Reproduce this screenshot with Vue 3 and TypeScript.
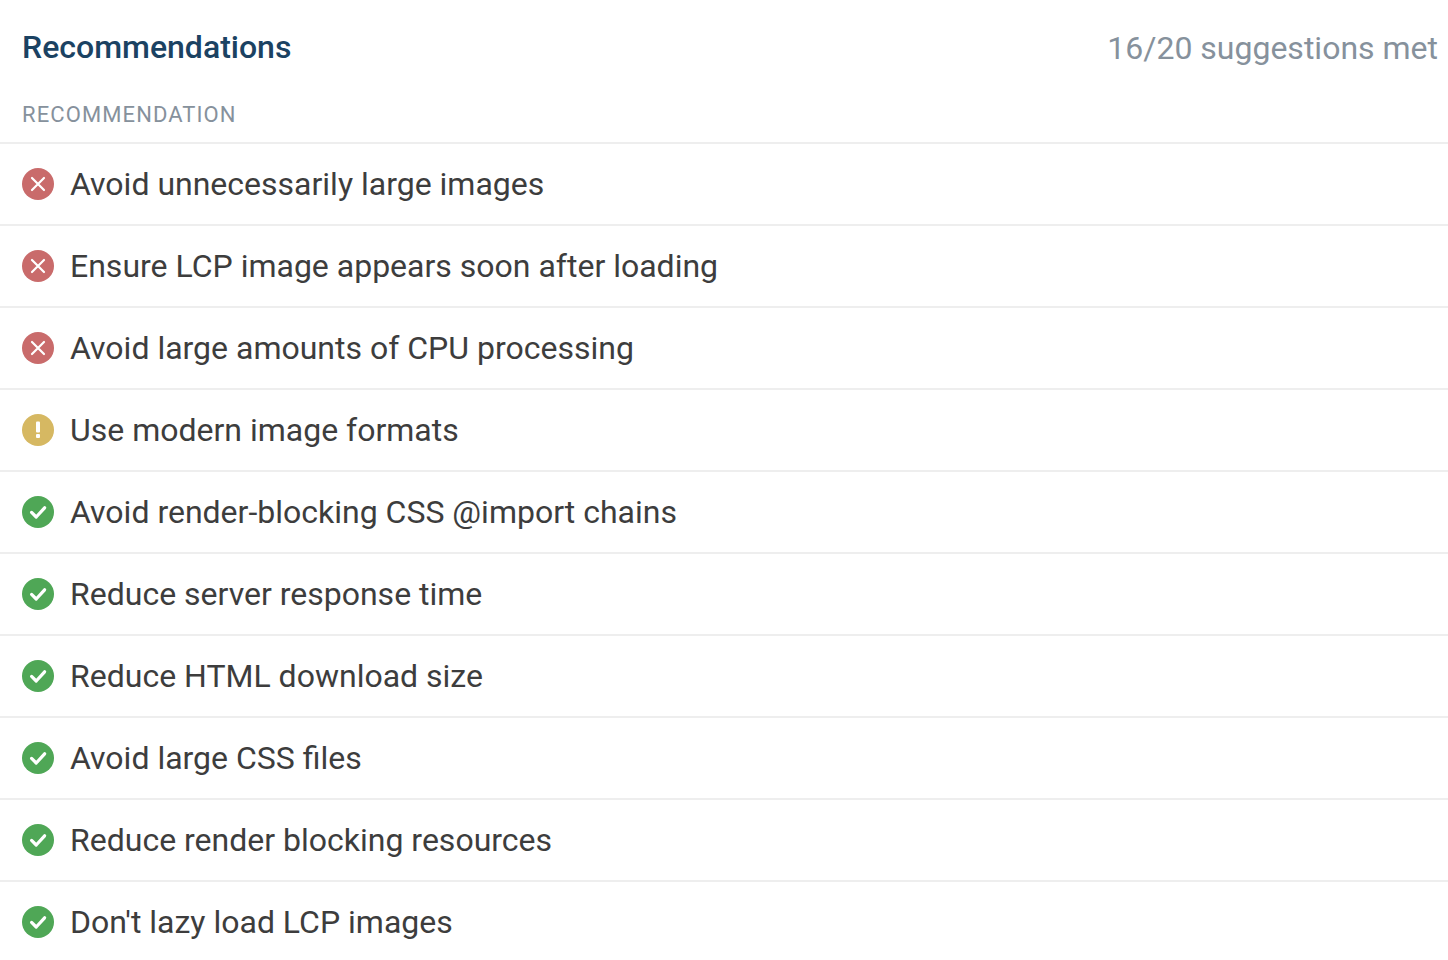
<script setup lang="ts">
type Status = 'fail' | 'warn' | 'pass'
const rows: { label: string; status: Status }[] = [
  { label: 'Avoid unnecessarily large images', status: 'fail' },
  { label: 'Ensure LCP image appears soon after loading', status: 'fail' },
  { label: 'Avoid large amounts of CPU processing', status: 'fail' },
  { label: 'Use modern image formats', status: 'warn' },
  { label: 'Avoid render-blocking CSS @import chains', status: 'pass' },
  { label: 'Reduce server response time', status: 'pass' },
  { label: 'Reduce HTML download size', status: 'pass' },
  { label: 'Avoid large CSS files', status: 'pass' },
  { label: 'Reduce render blocking resources', status: 'pass' },
  { label: "Don't lazy load LCP images", status: 'pass' },
]
</script>

<template>
  <div class="page">
    <header class="head">
      <h2 class="title">Recommendations</h2>
      <span class="met">16/20 suggestions met</span>
    </header>
    <div class="col">RECOMMENDATION</div>
    <ul class="list">
      <li v-for="r in rows" :key="r.label" class="row">
        <svg class="icon" viewBox="0 0 32 32" width="32" height="32" aria-hidden="true">
          <template v-if="r.status === 'fail'">
            <circle cx="16" cy="16" r="16" fill="#c96b6b" />
            <path d="M10 10 22 22M22 10 10 22" stroke="#fff" stroke-width="2.2" stroke-linecap="round" fill="none" />
          </template>
          <template v-else-if="r.status === 'warn'">
            <circle cx="16" cy="16" r="16" fill="#d6b862" />
            <rect x="14" y="7.4" width="4" height="11" rx="1" fill="#fff" />
            <rect x="14" y="20" width="4" height="4" rx="1" fill="#fff" />
          </template>
          <template v-else>
            <circle cx="16" cy="16" r="16" fill="#4fa756" />
            <path d="M9.6 16.4 14.2 21 22.6 11.8" stroke="#fff" stroke-width="3.2" stroke-linecap="round" stroke-linejoin="round" fill="none" />
          </template>
        </svg>
        <span class="label">{{ r.label }}</span>
      </li>
    </ul>
  </div>
</template>

<style>
html, body { margin: 0; background: #fff; overflow: hidden; }
</style>

<style scoped>
.page {
  width: 1448px;
  height: 960px;
  overflow: hidden;
  font-family: Roboto, "Liberation Sans", sans-serif;
  background: #fff;
}
.head {
  display: flex;
  justify-content: space-between;
  align-items: center;
  height: 96px;
  padding: 0 10px 0 22px;
  box-sizing: border-box;
}
.title {
  margin: 0 0 2px;
  font-size: 32px;
  font-weight: 500;
  color: #1b4262;
}
.met {
  font-size: 32px;
  color: #86919c;
}
.col {
  height: 48px;
  padding-left: 22px;
  box-sizing: border-box;
  font-size: 22px;
  line-height: 38px;
  letter-spacing: 1.1px;
  color: #86919c;
  border-bottom: 2px solid #eeeeee;
}
.list {
  list-style: none;
  margin: 0;
  padding: 0;
}
.row {
  display: flex;
  align-items: center;
  gap: 16px;
  height: 82px;
  padding-left: 22px;
  box-sizing: border-box;
  border-bottom: 2px solid #eeeeee;
}
.icon { flex: none; }
.label {
  font-size: 32px;
  color: #3d3d3d;
}
</style>
